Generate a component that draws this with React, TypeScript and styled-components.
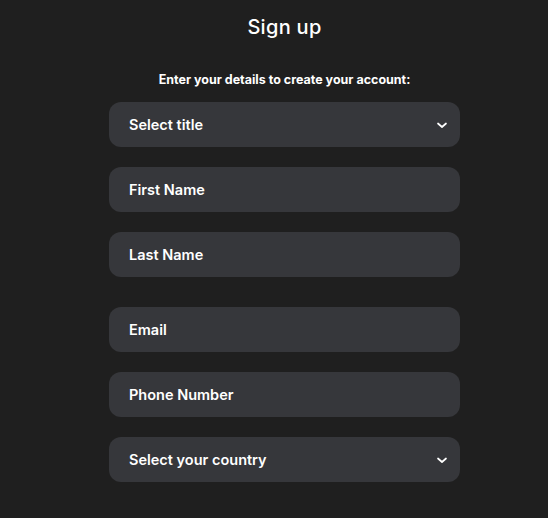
import React from "react";
import styled, { createGlobalStyle } from "styled-components";

const Global = createGlobalStyle`
  html, body { margin: 0; padding: 0; background: #1f1f1f; }
  body { font-family: "Inter", "Liberation Sans", sans-serif; color: #ffffff; }
  * { box-sizing: border-box; }
`;

const Page = styled.div`
  width: 548px;
  min-height: 518px;
  display: flex;
  flex-direction: column;
  align-items: center;
  padding: 12px 0 0 21px;
`;

const Title = styled.h1`
  margin: 0;
  font-size: 20px;
  font-weight: 500;
  line-height: 30px;
  letter-spacing: 0.3px;
`;

const Subtitle = styled.p`
  margin: 30px 0 0;
  font-size: 12.5px;
  font-weight: 700;
  line-height: 16px;
`;

const Form = styled.div`
  display: flex;
  flex-direction: column;
  width: 351px;
  margin-top: 14px;
`;

const Field = styled.div<{ $gap: number }>`
  height: 45px;
  margin-top: ${(p) => p.$gap}px;
  background: #36373b;
  border-radius: 12px;
  display: flex;
  align-items: center;
  justify-content: space-between;
  padding: 0 12px 0 20px;
  font-size: 14.5px;
  font-weight: 600;
`;

const Chevron = () => (
  <svg width="12" height="12" viewBox="0 0 12 12" fill="none">
    <path d="M2 4.5 L6 8 L10 4.5" stroke="#fff" strokeWidth="1.7" strokeLinecap="round" strokeLinejoin="round" />
  </svg>
);

const fields: { label: string; gap: number; select?: boolean }[] = [
  { label: "Select title", gap: 0, select: true },
  { label: "First Name", gap: 20 },
  { label: "Last Name", gap: 20 },
  { label: "Email", gap: 30 },
  { label: "Phone Number", gap: 20 },
  { label: "Select your country", gap: 20, select: true },
];

export default function App() {
  return (
    <>
      <Global />
      <Page>
        <Title>Sign up</Title>
        <Subtitle>Enter your details to create your account:</Subtitle>
        <Form>
          {fields.map((f) => (
            <Field key={f.label} $gap={f.gap}>
              <span>{f.label}</span>
              {f.select && <Chevron />}
            </Field>
          ))}
        </Form>
      </Page>
    </>
  );
}
